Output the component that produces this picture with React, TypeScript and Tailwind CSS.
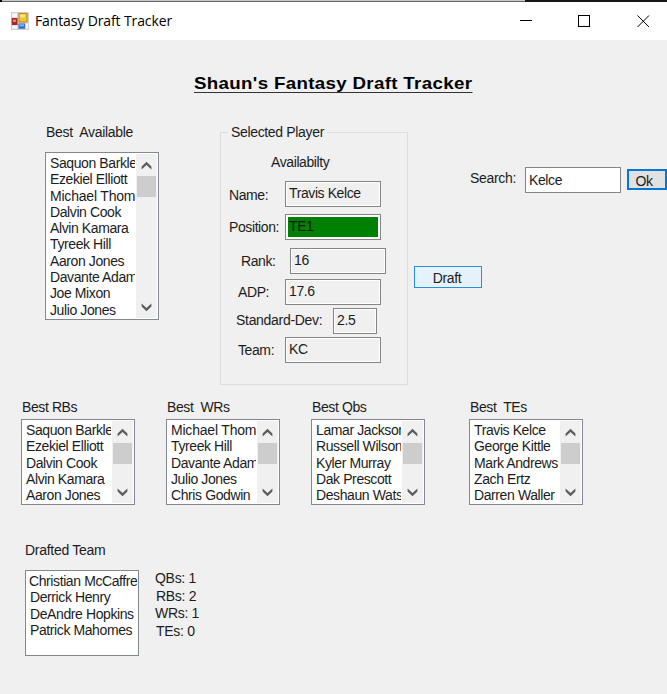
import React from "react";

type ListProps = { items: string[]; className: string; scroll?: boolean };

function Chevron({ down = false }: { down?: boolean }) {
  return (
    <svg width="11" height="9" viewBox="0 0 11 9" className={down ? "rotate-180" : ""}>
      <path d="M0.6 5.6 L5.5 0.7 L10.4 5.6 V8.6 L5.5 4 L0.6 8.6 Z" fill="#5c5c5c" />
    </svg>
  );
}

function ListBox({ items, className, scroll = true }: ListProps) {
  return (
    <div className={`flex w-[114px] overflow-hidden border border-[#828790] bg-white ${className}`}>
      <div className="min-w-0 flex-1 pr-px">
        <ul className="h-full overflow-hidden pl-[4px] pt-[2px] leading-[16.3px]">
          {items.map((name) => (
            <li key={name} className={`whitespace-pre ${name.startsWith("Michael") ? "tracking-[-0.2px]" : name.startsWith("Christian") ? "-ml-px" : ""}`}>
              {name}
            </li>
          ))}
        </ul>
      </div>
      {scroll && (
        <div className="my-px mr-px flex w-[21px] flex-col items-center bg-[#f0f0f0] pb-[6px] pt-[7px]">
          <Chevron />
          <div className="mt-[6px] h-[21px] w-[19px] shrink-0 bg-[#cdcdcd]" />
          <div className="flex-1" />
          <Chevron down />
        </div>
      )}
    </div>
  );
}

type FieldProps = { label: string; value: string; row: string; labelClass: string; box?: string };

function Field({ label, value, row, labelClass, box = "w-[96px] bg-[#f0f0f0] shadow-[inset_0_0_0_1px_#fff]" }: FieldProps) {
  return (
    <div className={`flex h-[26px] ${row}`}>
      <span className={`shrink-0 whitespace-pre ${labelClass}`}>{label}</span>
      <div className={`h-[26px] shrink-0 border border-[#858585] pl-[3px] pt-[3px] ${box}`}>
        {value}
      </div>
    </div>
  );
}

const best = ["Saquon Barkley", "Ezekiel Elliott", "Michael Thomas", "Dalvin Cook", "Alvin Kamara", "Tyreek Hill", "Aaron Jones", "Davante Adams", "Joe Mixon", "Julio Jones"];
const positions = [
  { title: "Best RBs", names: ["Saquon Barkley", "Ezekiel Elliott", "Dalvin Cook", "Alvin Kamara", "Aaron Jones"], col: "w-[145px]" },
  { title: "Best  WRs", names: ["Michael Thomas", "Tyreek Hill", "Davante Adams", "Julio Jones", "Chris Godwin"], col: "w-[145px]" },
  { title: "Best Qbs", names: ["Lamar Jackson", "Russell Wilson", "Kyler Murray", "Dak Prescott", "Deshaun Watson"], col: "w-[158px]" },
  { title: "Best  TEs", names: ["Travis Kelce", "George Kittle", "Mark Andrews", "Zach Ertz", "Darren Waller"], col: "w-[114px]" },
];

export default function App() {
  return (
    <div className="h-[694px] w-[667px] overflow-hidden bg-[#f0f0f0] font-['Liberation_Sans',Arial,sans-serif] text-[14px] leading-[17px] tracking-[-0.4px] text-[#1c1c1c]">
      <div className="flex h-[2px]">
        <div className="h-[2px] w-[2px] bg-black" />
        <div className="h-[2px] w-[523px] border-b border-[#6a6a6a] bg-[#c8c8c8]" />
        <div className="h-[2px] flex-1 bg-[#181818]" />
      </div>
      <header className="flex h-[38px] items-center bg-white pl-[11px]">
        <svg width="18" height="18" viewBox="0 0 18 18">
          <path d="M0 0h18v18H0z" fill="#cfcfcf" />
          <path d="M1.2 1.2h4.8v4.3H1.2zM1.2 13.5h5v3.2h-5zM15 11.5h2v5.2h-2z" fill="#f7f7f7" />
          <path d="M7.5 1h9v9.5h-9z" fill="#b88a12" />
          <path d="M8.5 2h7v7.5h-7z" fill="#f3c335" />
          <path d="M9 2.5h5v3H9z" fill="#ffe383" />
          <path d="M0.7 6h5.8v7H0.7z" fill="#a52922" />
          <path d="M2 7.5h3v2.5H2z" fill="#e0837d" />
          <path d="M7.5 11.5h6.5v5.3H7.5z" fill="#3871d2" />
          <path d="M8.5 12.3h4.5v2H8.5z" fill="#83b0f6" />
        </svg>
        <span className="-mt-px ml-[6px] font-['Open_Sans',sans-serif] text-[14px] tracking-[-0.12px] text-black">Fantasy Draft Tracker</span>
        <svg className="ml-auto mr-[16px]" width="131" height="14" viewBox="0 0 131 14" fill="none" stroke="#000" shapeRendering="crispEdges">
          <path d="M0 6.5h12" />
          <path d="M58.5 1.5h11v11h-11z" />
          <path d="M117.5 1.5l11.5 11.5M129 1.5l-11.5 11.5" shapeRendering="auto" />
        </svg>
      </header>

      <h1 className="mt-[34px] h-[23px] pl-[194px] text-[17px] font-bold leading-[20px] tracking-[0.3px] text-black">
        <span className="inline-block h-[18px] origin-left scale-x-[1.101] border-b border-[#333] leading-[18px]">Shaun's Fantasy Draft Tracker</span>
      </h1>

      <section className="mt-[27px] flex h-[275px] pl-[45px]">
        <div className="w-[175px]">
          <div className="h-[28px] whitespace-pre pl-[1px] tracking-[-0.3px]">Best  Available</div>
          <ListBox items={best} className="h-[168px]" />
        </div>

        <fieldset className="h-[261px] w-[188px] border border-[#dcdcdc] pt-[13px]">
          <legend className="ml-[7px] whitespace-pre px-[3px] tracking-[-0.34px]">Selected Player</legend>
          <div className="pl-[50px]">Availabilty</div>
          <Field label="Name:" value="Travis Kelce" row="mt-[10px] pl-[8px]" labelClass="w-[56px] pt-[6px]" />
          <Field label="Position:" value="TE1" row="mt-[7px] pl-[8px]" labelClass="w-[56px] pt-[5px]" box="w-[96px] bg-[#008000] shadow-[inset_0_0_0_2px_#fff]" />
          <Field label="Rank:" value="16" row="mt-[8px] pl-[20px]" labelClass="w-[49px] pt-[5px]" />
          <Field label="ADP:" value="17.6" row="mt-[5px] pl-[17px]" labelClass="w-[47px] pt-[5px]" />
          <Field label="Standard-Dev:" value="2.5" row="mt-[3px] pl-[15px]" labelClass="w-[97px] pt-[4px] tracking-[-0.3px]" box="w-[44px] bg-[#f0f0f0] shadow-[inset_0_0_0_1px_#fff]" />
          <Field label="Team:" value="KC" row="mt-[3px] pl-[17px]" labelClass="w-[47px] pt-[5px]" />
        </fieldset>

        <div className="ml-[6px] pt-[43px]">
          <div className="flex pl-[56px]">
            <span className="w-[55px] pt-[3px] tracking-[-0.3px]">Search:</span>
            <div className="h-[26px] w-[96px] border border-[#858585] bg-white pl-[3px] pt-[4px]">Kelce</div>
            <button className="ml-[6px] mt-[2px] h-[21px] w-[40px] border-2 border-[#0078d7] bg-[#e1e1e1] pr-[6px] pt-[2px] leading-[17px]">Ok</button>
          </div>
          <button className="mt-[73px] h-[22px] w-[68px] border border-[#2a8ee0] bg-[#e5f1fb] pr-[2px] pt-[3px] leading-[17px]">Draft</button>
        </div>
      </section>

      <section className="flex h-[143px] pl-[21px]">
        {positions.map((p) => (
          <div key={p.title} className={p.col}>
            <div className="h-[20px] whitespace-pre pl-[1px]">{p.title}</div>
            <ListBox items={p.names} className="h-[86px]" />
          </div>
        ))}
      </section>

      <section className="pl-[25px]">
        <div className="h-[28px] tracking-[-0.28px]">Drafted Team</div>
        <div className="flex">
          <ListBox items={["Christian McCaffrey", "Derrick Henry", "DeAndre Hopkins", "Patrick Mahomes"]} className="h-[86px]" scroll={false} />
          <div className="ml-[16px] leading-[17.5px] tracking-[-0.3px]">
            <div>QBs: 1</div>
            <div className="pl-px">RBs: 2</div>
            <div>WRs: 1</div>
            <div className="pl-px">TEs: 0</div>
          </div>
        </div>
      </section>
    </div>
  );
}
